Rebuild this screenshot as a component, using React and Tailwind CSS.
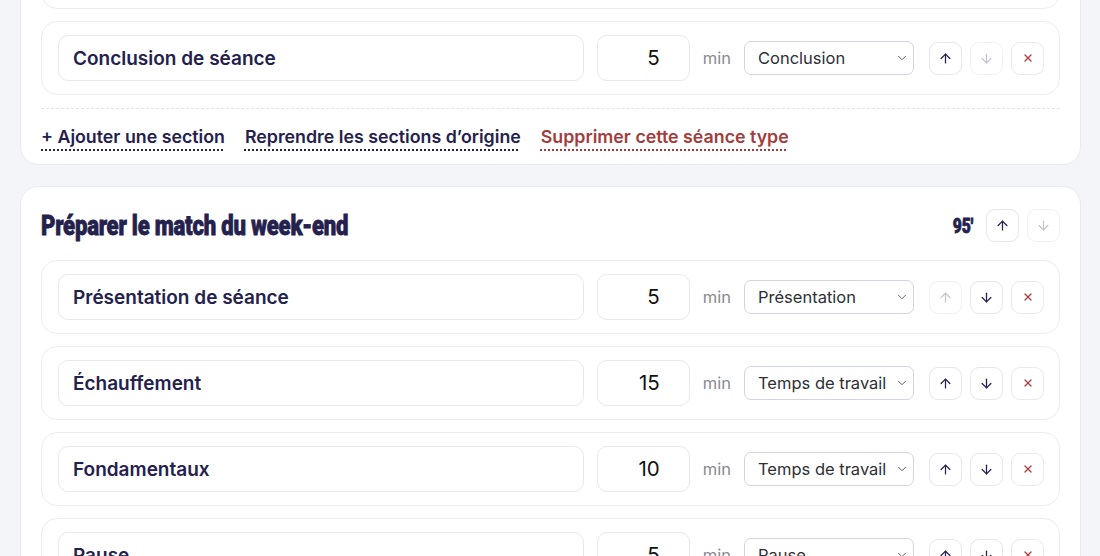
import React from "react";
import { ArrowUp, ArrowDown, X, ChevronDown } from "lucide-react";

const NAVY = "text-[#24214d]";

function IconBtn({ children, disabled, danger }) {
  return (
    <div
      className={
        "flex h-[33px] w-[33px] items-center justify-center rounded-[9px] border bg-white " +
        (disabled ? "border-[#f0f1f4] text-[#c4c5d2]" : danger ? "border-[#e9eaf0] text-[#b23a3a]" : "border-[#e6e7ee] text-[#24214d]")
      }
    >
      {children}
    </div>
  );
}

function Row({ name, min, type, upDisabled, downDisabled }) {
  return (
    <div className="flex h-[74px] items-center gap-[13px] rounded-[16px] border border-[#ecedf2] bg-white pl-[16px] pr-[15px]">
      <div className={"flex h-[46px] flex-1 items-center rounded-[10px] border border-[#e8e9ee] pl-[14px] pt-[2px] text-[19px] font-semibold " + NAVY}>
        {name}
      </div>
      <div className="flex h-[46px] w-[93px] items-center justify-end rounded-[10px] border border-[#e8e9ee] pr-[29px] pt-[1px] text-[20.5px] text-[#111111]">
        {min}
      </div>
      <div className="text-[16.5px] text-[#8a8a8f]">min</div>
      <div className="flex h-[34px] w-[170px] items-center justify-between rounded-[7px] border border-[#d3d4e3] pl-[13px] pr-[4px] text-[16.5px] text-[#2f2f36]">
        <span className="whitespace-nowrap">{type}</span>
        <ChevronDown size={14} strokeWidth={1.6} className="text-[#555]" />
      </div>
      <div className="ml-[2px] flex gap-2">
        <IconBtn disabled={upDisabled}>
          <ArrowUp size={15} strokeWidth={2} />
        </IconBtn>
        <IconBtn disabled={downDisabled}>
          <ArrowDown size={15} strokeWidth={2} />
        </IconBtn>
        <IconBtn danger>
          <X size={12} strokeWidth={2.6} />
        </IconBtn>
      </div>
    </div>
  );
}

const condensed = "[font-family:Roboto,sans-serif] font-black [-webkit-text-stroke:0.8px_#24214d]";

export default function App() {
  return (
    <div className="h-[556px] overflow-hidden bg-[#f4f5f9] pl-5 pr-[19px] [font-family:Inter,'Noto_Sans',sans-serif]">
      <div className="-mt-[86px] rounded-[18px] border border-[#e9eaf0] bg-white px-5 pt-5 pb-[15px]">
        <div className="flex flex-col gap-3">
          <Row name="Retour au calme" min="10" type="Temps de travail" />
          <Row name="Conclusion de séance" min="5" type="Conclusion" downDisabled />
        </div>
        <div className="mt-[13px] border-t border-dashed border-[#e4e5ea]" />
        <div className={"mt-[15px] flex gap-5 text-[17.8px] font-semibold leading-[25px] " + NAVY}>
          <span className="underline decoration-dotted decoration-[1.5px] underline-offset-[6px]">+ Ajouter une section</span>
          <span className="underline decoration-dotted decoration-[1.5px] underline-offset-[6px]">Reprendre les sections d’origine</span>
          <span className="text-[#a33c3c] underline decoration-dotted decoration-[1.5px] underline-offset-[6px]">Supprimer cette séance type</span>
        </div>
      </div>

      <div className="mt-[21px] rounded-[18px] border border-[#e9eaf0] bg-white px-5 pt-[22px] pb-5">
        <div className="flex h-[33px] items-center justify-between">
          <h2 className={"inline-block origin-left scale-x-[0.79] whitespace-nowrap text-[28px] leading-none tracking-[-0.3px] " + condensed + " " + NAVY}>
            Préparer le match du week-end
          </h2>
          <div className="flex items-center">
            <span className={"mr-[13px] inline-block origin-right scale-x-[0.78] text-[20px] leading-none " + condensed + " " + NAVY}>95′</span>
            <div className="flex gap-2">
              <IconBtn>
                <ArrowUp size={15} strokeWidth={2} />
              </IconBtn>
              <IconBtn disabled>
                <ArrowDown size={15} strokeWidth={2} />
              </IconBtn>
            </div>
          </div>
        </div>
        <div className="mt-[18px] flex flex-col gap-3">
          <Row name="Présentation de séance" min="5" type="Présentation" upDisabled />
          <Row name="Échauffement" min="15" type="Temps de travail" />
          <Row name="Fondamentaux" min="10" type="Temps de travail" />
          <Row name="Pause" min="5" type="Pause" />
        </div>
      </div>
    </div>
  );
}
